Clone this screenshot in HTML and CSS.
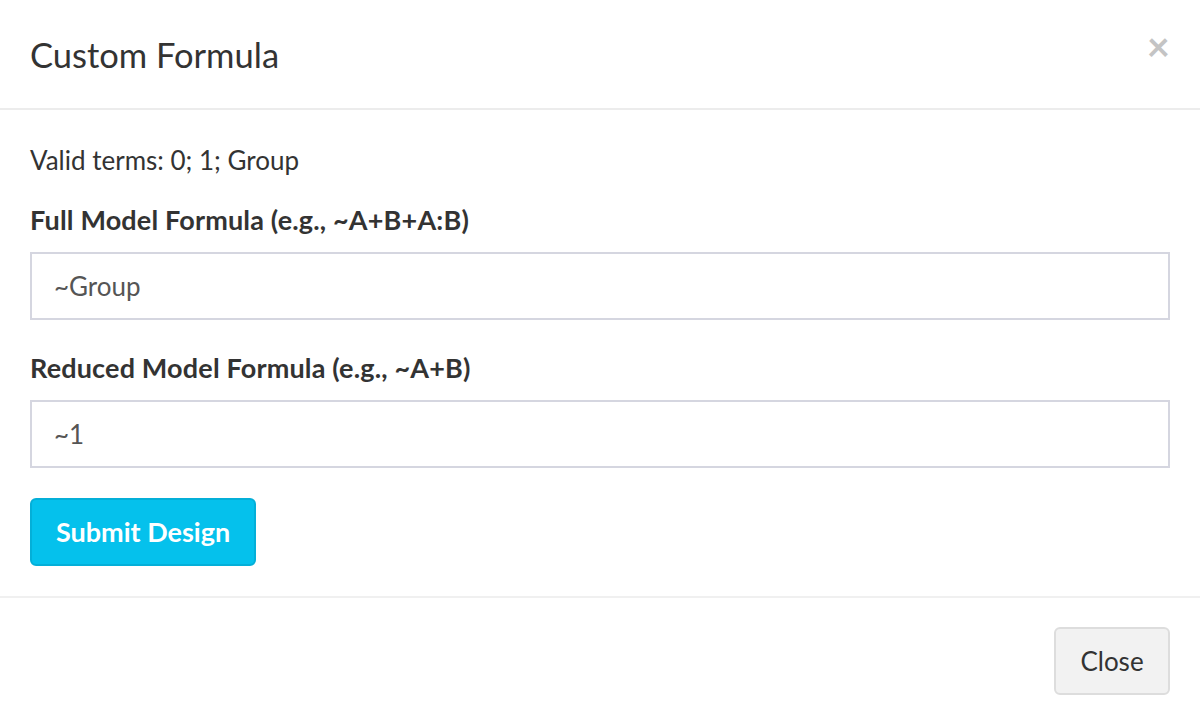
FILE: index.html
```html
<!DOCTYPE html>
<html>
<head>
<meta charset="utf-8">
<link rel="stylesheet" href="styles.css">
</head>
<body>
<div class="modal">
  <div class="modal-header">
    <h4 class="modal-title">Custom Formula</h4>
    <button class="close" type="button">×</button>
  </div>
  <div class="modal-body">
    <p class="terms">Valid terms: 0; 1; Group</p>
    <div class="form-group">
      <label class="label">Full Model Formula (e.g., ~A+B+A:B)</label>
      <input class="input" type="text" value="~Group">
    </div>
    <div class="form-group">
      <label class="label">Reduced Model Formula (e.g., ~A+B)</label>
      <input class="input" type="text" value="~1">
    </div>
    <button class="btn btn-info" type="button">Submit Design</button>
  </div>
  <div class="modal-footer">
    <button class="btn btn-default" type="button">Close</button>
  </div>
</div>
</body>
</html>
```
FILE: styles.css
```css
* { box-sizing: border-box; }
html, body {
  margin: 0;
  padding: 0;
  background: #fff;
}
body {
  font-family: "Lato", "Open Sans", sans-serif;
  font-size: 26px;
  line-height: 40px;
  color: #333;
  width: 1200px;
  height: 724px;
  overflow: hidden;
}
.modal {
  display: flex;
  flex-direction: column;
}
.modal-header {
  display: flex;
  justify-content: space-between;
  align-items: flex-start;
  padding: 30px;
  height: 110px;
  border-bottom: 2px solid #ececec;
}
.modal-title {
  margin: 0;
  font-size: 34.5px;
  font-weight: 400;
  line-height: 50px;
  color: #333;
}
.close {
  border: 0;
  background: transparent;
  padding: 0;
  margin-top: -4px;
  font-family: "Lato", "Open Sans", sans-serif;
  font-size: 40px;
  font-weight: 700;
  line-height: 40px;
  color: #c4c4c4;
  cursor: pointer;
}
.modal-body {
  padding: 30px;
  display: flex;
  flex-direction: column;
  align-items: flex-start;
}
.terms {
  margin: 0 0 20px 0;
}
.form-group {
  width: 100%;
  margin-bottom: 28px;
  display: flex;
  flex-direction: column;
}
.label {
  font-size: 27px;
  letter-spacing: 0.17px;
  font-weight: 700;
  margin-bottom: 12px;
}
.input {
  width: 100%;
  height: 68px;
  padding: 0 22px;
  border: 2px solid #d5d6e0;
  border-radius: 0;
  font-family: "Lato", "Open Sans", sans-serif;
  font-size: 26px;
  color: #555;
  outline: none;
}
.btn {
  height: 68px;
  padding: 0 24px;
  border-radius: 6px;
  font-family: "Lato", "Open Sans", sans-serif;
  font-size: 26px;
  line-height: 40px;
  cursor: pointer;
}
.btn-info {
  margin-top: 2px;
  background: #05c1ec;
  border: 2px solid #04afd8;
  color: #fff;
  font-size: 27px;
  font-weight: 700;
}
.modal-footer {
  border-top: 2px solid #f0f0f0;
  padding: 29px 30px 30px;
  display: flex;
  justify-content: flex-end;
}
.btn-default {
  background: #f2f2f2;
  border: 2px solid #dddddd;
  color: #333;
  font-weight: 400;
  width: 116px;
}
```
